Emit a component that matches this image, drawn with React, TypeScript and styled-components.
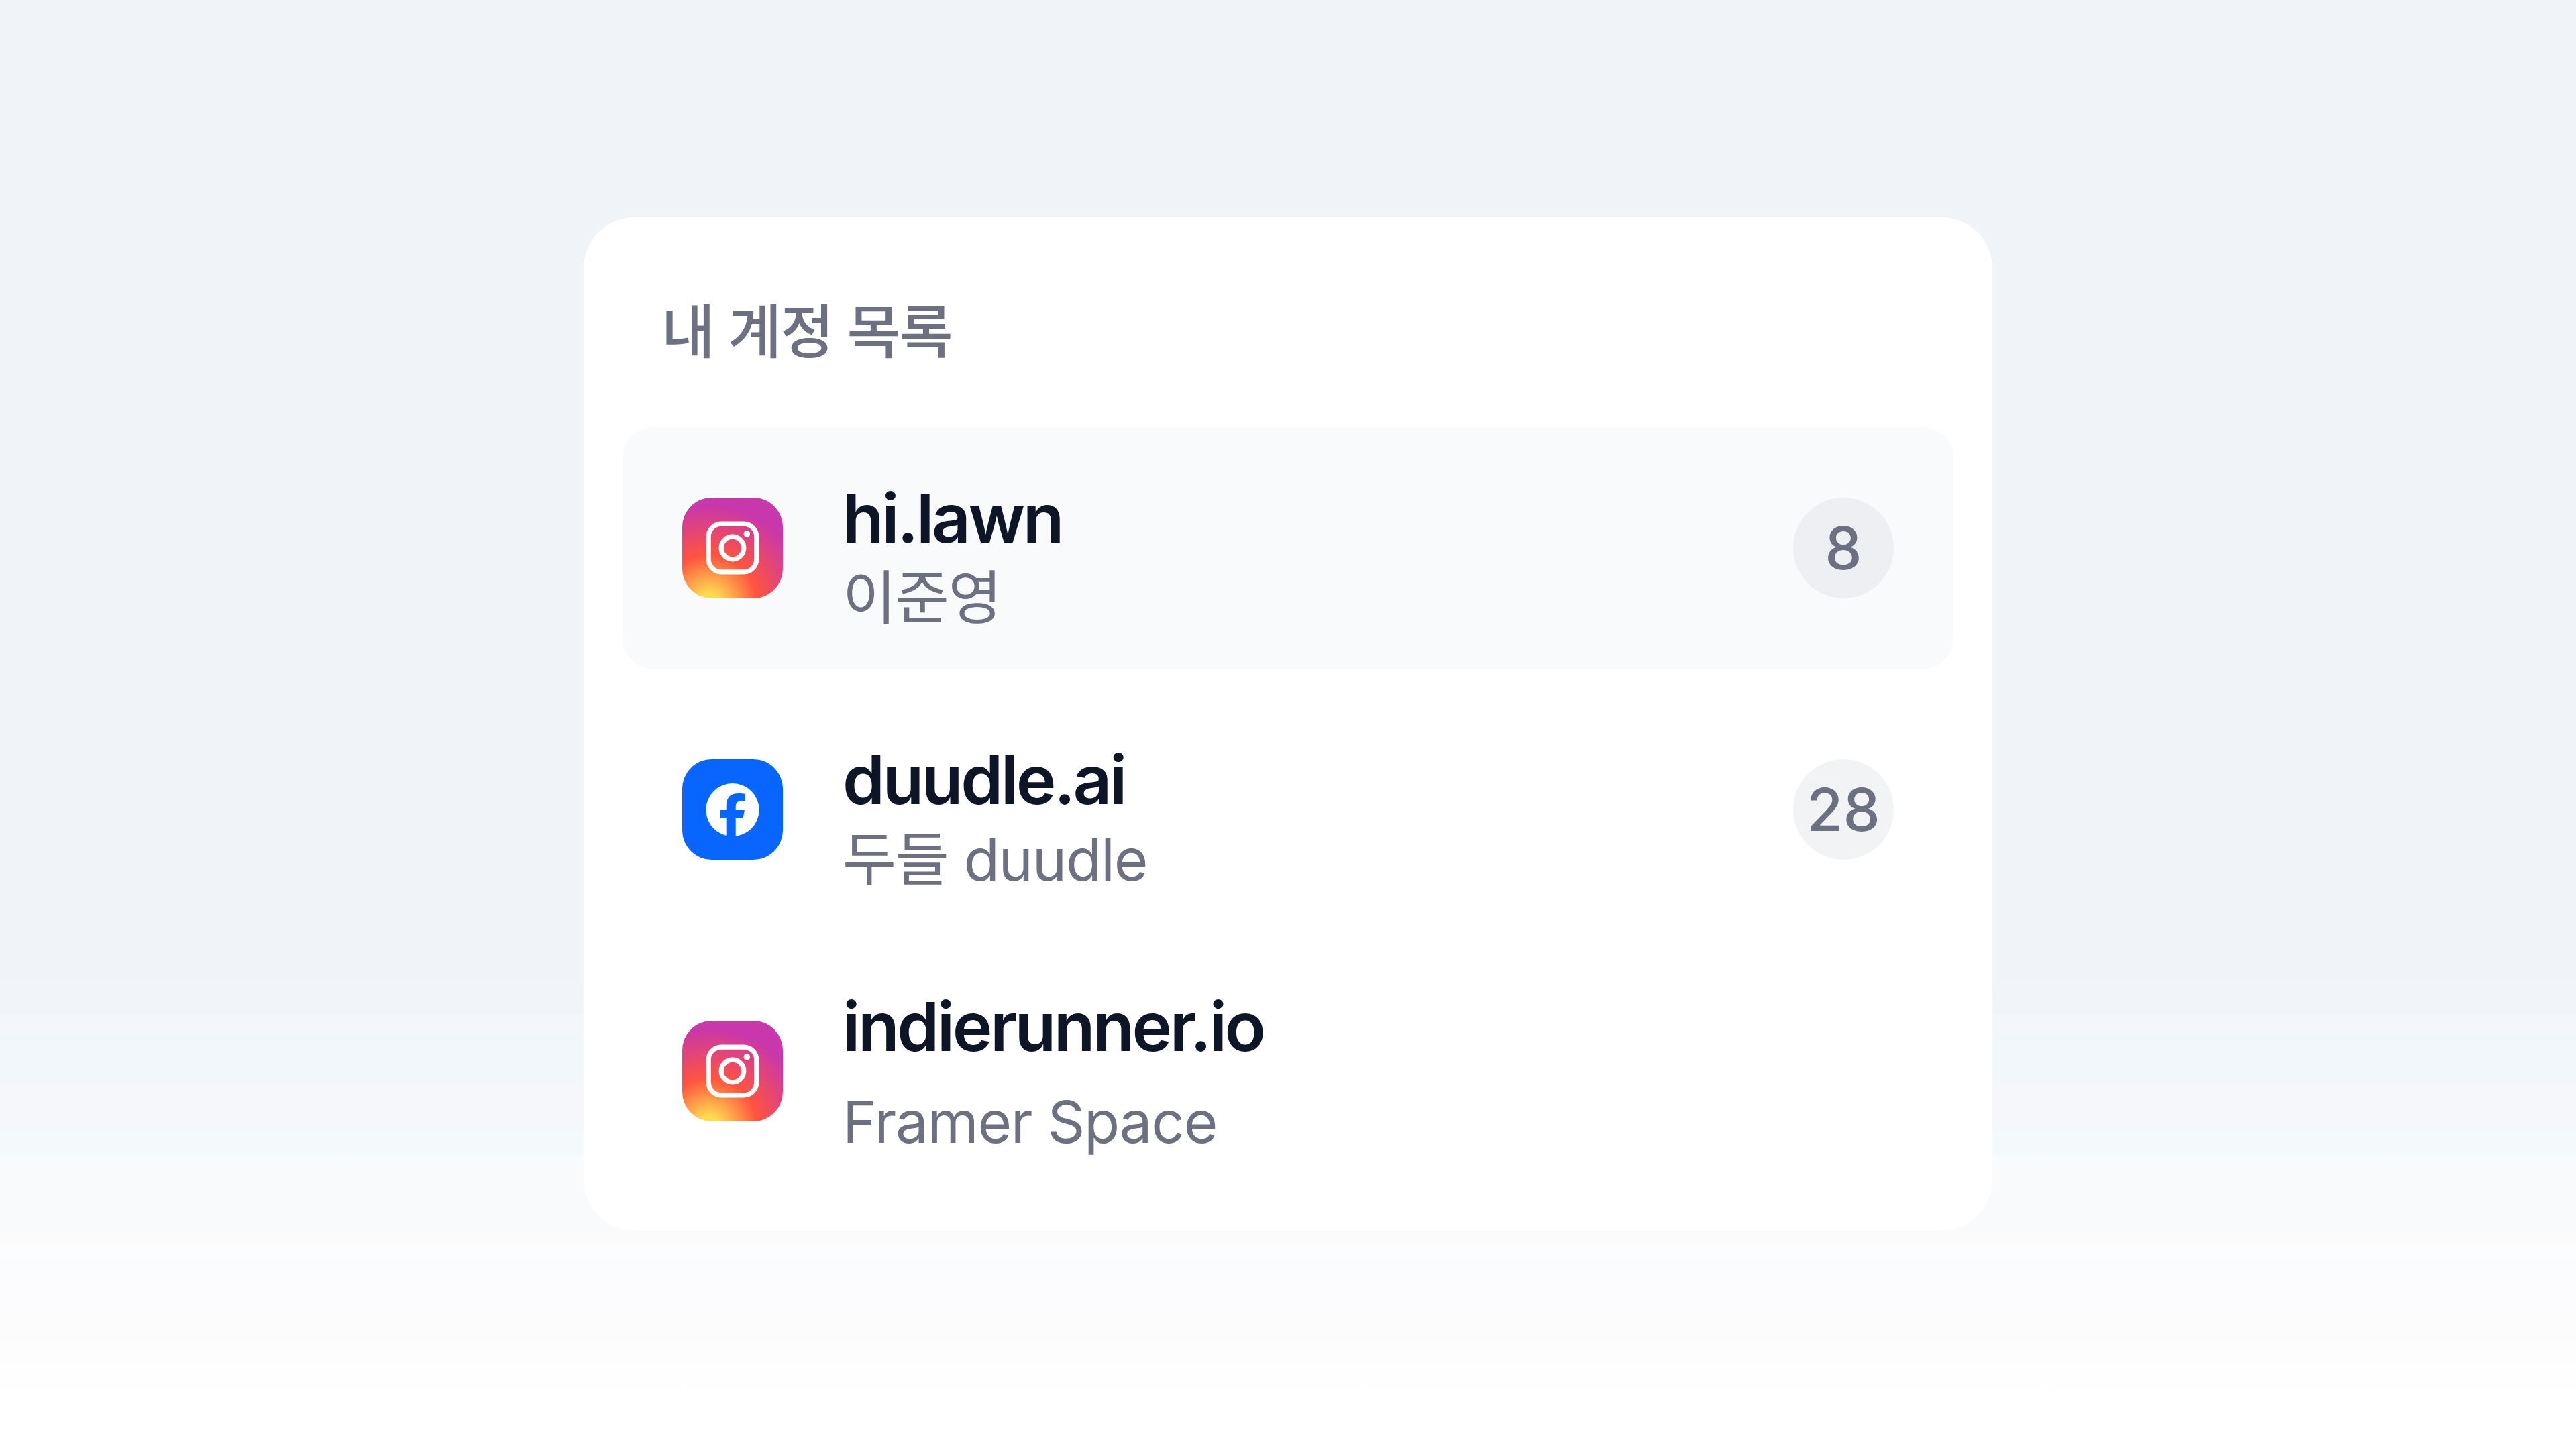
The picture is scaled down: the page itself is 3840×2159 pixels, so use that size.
import React, { useId } from "react";
import styled, { createGlobalStyle } from "styled-components";

const Global = createGlobalStyle`
  * { box-sizing: border-box; }
  html, body { margin: 0; padding: 0; }
  body { font-family: Inter, "Noto Sans CJK KR", sans-serif; }
`;

const Page = styled.main`
  width: 3840px;
  height: 2159px;
  overflow: hidden;
  padding-top: 324px;
  background: linear-gradient(
    180deg,
    #f0f4f9 0,
    #f0f4f9 1460px,
    #f1f4f9 1510px,
    #f4f6fa 1514px,
    #f4f6fa 1535px,
    #f1f7fa 1556px,
    #f1f7fa 1612px,
    #f5f7fb 1617px,
    #f5f7fb 1685px,
    #f4f9fc 1690px,
    #f5f9fc 1719px,
    #f8fafc 1723px,
    #f9fafc 1822px,
    #fafafa 1834px,
    #fafafa 1854px,
    #fcfdfe 1859px,
    #fcfcfe 1940px,
    #fdfdfd 2028px,
    #fefefe 2036px,
    #ffffff 2110px
  );
`;

const Card = styled.section`
  width: 2100px;
  height: 1511px;
  margin: 0 auto;
  padding: 120px 58px 58px;
  border-radius: 76px;
  background: #ffffff;
`;

const Title = styled.h1`
  margin: 0 0 73px;
  padding: 2px 0 0 58px;
  height: 120px;
  line-height: 100px;
  font-size: 87px;
  font-weight: 500;
  letter-spacing: -2px;
  white-space: nowrap;
  color: #6d7080;
`;

const List = styled.ul`
  display: flex;
  flex-direction: column;
  gap: 30px;
  margin: 0;
  padding: 0;
  list-style: none;
`;

const Row = styled.li<{ $active?: boolean }>`
  display: flex;
  align-items: center;
  gap: 89px;
  height: 360px;
  padding: 0 89px;
  border-radius: 45px;
  background: ${(p) => (p.$active ? "#f8fafc" : "transparent")};
`;

const Icon = styled.svg`
  display: block;
  flex: none;
  width: 150px;
  height: 150px;
`;

const Labels = styled.div<{ $loose?: boolean }>`
  display: flex;
  flex: 1;
  flex-direction: column;
  gap: ${(p) => (p.$loose ? "23px" : "0")};
  padding-top: ${(p) => (p.$loose ? "9px" : "30px")};
`;

const Name = styled.strong`
  line-height: 120px;
  font-size: 101px;
  font-weight: 600;
  letter-spacing: -3.5px;
  white-space: nowrap;
  color: #0d1526;
`;

const Owner = styled.span`
  line-height: 120px;
  font-size: 87px;
  font-weight: 400;
  letter-spacing: -1.3px;
  white-space: nowrap;
  color: #6d7080;
`;

const Badge = styled.span<{ $active?: boolean }>`
  display: flex;
  align-items: center;
  justify-content: center;
  width: 150px;
  height: 150px;
  border-radius: 50%;
  font-size: 88px;
  font-weight: 500;
  color: #6d7080;
  background: ${(p) => (p.$active ? "#eeeff3" : "#f2f3f5")};
`;

function InstagramIcon() {
  const id = useId();
  return (
    <Icon viewBox="0 0 150 150" aria-label="Instagram">
      <defs>
        <radialGradient id={id} gradientUnits="userSpaceOnUse" cx="40" cy="158" r="150">
          <stop offset="0" stopColor="#ffe04f" />
          <stop offset="0.1" stopColor="#ffdb50" />
          <stop offset="0.48" stopColor="#ff543f" />
          <stop offset="0.98" stopColor="#c837ab" />
        </radialGradient>
      </defs>
      <rect width="150" height="150" rx="44" fill={`url(#${id})`} />
      <rect x="39.2" y="39.2" width="71.6" height="71.6" rx="19" fill="none" stroke="#fff" strokeWidth="7.2" />
      <circle cx="75" cy="75" r="16.8" fill="none" stroke="#fff" strokeWidth="7.2" />
      <circle cx="96.4" cy="54" r="4.8" fill="#fff" />
    </Icon>
  );
}

function FacebookIcon() {
  return (
    <Icon viewBox="0 0 150 150" aria-label="Facebook">
      <rect width="150" height="150" rx="44" fill="#0866ff" />
      <circle cx="75" cy="75.5" r="39.6" fill="#fff" />
      <path
        fill="#0866ff"
        d="M65.7 116V87.700H57V76H65.700V70.500C65.700 56.500 72 51 84.500 51C87.500 51 91 51.300 93.700 51.800V62.800C92 62.500 90.300 62.500 88.500 62.500C82.500 62.500 79.700 65 79.700 71V76H92.800L90.700 87.700H79.700V116Z"
      />
    </Icon>
  );
}

type Account = {
  name: string;
  owner: string;
  kind: "instagram" | "facebook";
  count?: number;
  active?: boolean;
  loose?: boolean;
};

const accounts: Account[] = [
  { name: "hi.lawn", owner: "이준영", kind: "instagram", count: 8, active: true },
  { name: "duudle.ai", owner: "두들 duudle", kind: "facebook", count: 28 },
  { name: "indierunner.io", owner: "Framer Space", kind: "instagram", loose: true },
];

export default function App() {
  return (
    <Page>
      <Global />
      <Card>
        <Title>내 계정 목록</Title>
        <List>
          {accounts.map((a) => (
            <Row key={a.name} $active={a.active}>
              {a.kind === "instagram" ? <InstagramIcon /> : <FacebookIcon />}
              <Labels $loose={a.loose}>
                <Name>{a.name}</Name>
                <Owner>{a.owner}</Owner>
              </Labels>
              {a.count !== undefined && <Badge $active={a.active}>{a.count}</Badge>}
            </Row>
          ))}
        </List>
      </Card>
    </Page>
  );
}
